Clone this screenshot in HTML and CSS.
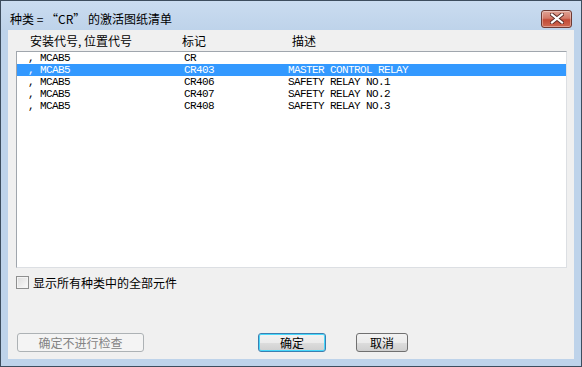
FILE: index.html
```html
<!DOCTYPE html>
<html lang="zh-CN">
<head>
    <meta charset="UTF-8">
    <title>激活图纸清单</title>
    <link rel="stylesheet" href="styles.css">
</head>
<body>
    <div class="window">
        <!-- Titelleiste -->
        <div class="titlebar">
            <span class="title">种类 = “CR” 的激活图纸清单</span>
            <button class="close" aria-label="关闭">
                <svg width="14" height="11" viewBox="0 0 14 11">
                    <path d="M2 1.5 L12 9.5 M12 1.5 L2 9.5" stroke="#5a2a24" stroke-width="4" stroke-linecap="square"/>
                    <path d="M2 1.5 L12 9.5 M12 1.5 L2 9.5" stroke="#ffffff" stroke-width="2.2" stroke-linecap="square"/>
                </svg>
            </button>
        </div>

        <div class="client">
            <div class="columns">
                <span>安装代号, 位置代号</span>
                <span>标记</span>
                <span>描述</span>
            </div>

            <div class="listbox" id="drawing-list">
                <!-- Zeilen werden per Skript eingefügt -->
            </div>

            <label class="check">
                <span class="box"></span>
                <span>显示所有种类中的全部元件</span>
            </label>

            <div class="buttons">
                <button class="btn btn-nocheck" disabled>确定不进行检查</button>
                <button class="btn btn-ok">确定</button>
                <button class="btn btn-cancel">取消</button>
            </div>
        </div>
    </div>

    <script>
        // Daten der Liste
        const rows = [
            ["MCAB5", "CR", ""],
            ["MCAB5", "CR403", "MASTER CONTROL RELAY"],
            ["MCAB5", "CR406", "SAFETY RELAY NO.1"],
            ["MCAB5", "CR407", "SAFETY RELAY NO.2"],
            ["MCAB5", "CR408", "SAFETY RELAY NO.3"]
        ];
        const selected = 1;

        const list = document.getElementById("drawing-list");
        rows.forEach((item, i) => {
            const row = document.createElement("div");
            row.className = "row" + (i === selected ? " selected" : "");
            row.innerHTML = `
                <span>, ${item[0]}</span>
                <span>${item[1]}</span>
                <span>${item[2]}</span>
            `;
            list.appendChild(row);
        });
    </script>
</body>
</html>
```

FILE: styles.css
```css
* {
    box-sizing: border-box;
    margin: 0;
    padding: 0;
}

body {
    width: 582px;
    height: 367px;
    font-family: "Noto Sans CJK SC", "Noto Sans", sans-serif;
    font-size: 12px;
    color: #000;
    background: #fff;
}

.window {
    width: 582px;
    height: 367px;
    border: 1px solid #3d4d5e;
    background: #bed3ea;
    display: flex;
    flex-direction: column;
    padding: 0 7px 7px 7px;
}

.titlebar {
    height: 29px;
    padding-top: 6px;
    display: flex;
    align-items: center;
    justify-content: space-between;
    margin: 0 -7px;
    padding-left: 9px;
    padding-right: 9px;
    background: linear-gradient(#cadcf0, #bed3ea);
}

.title {
    font-size: 12px;
    line-height: 14px;
}

.close {
    width: 31px;
    height: 18px;
    border: 1px solid #6e3a33;
    border-radius: 3px;
    background: linear-gradient(#e0a395 0%, #d47a68 45%, #c24a36 55%, #cf6a52 100%);
    display: flex;
    align-items: center;
    justify-content: center;
    box-shadow: inset 0 0 0 1px rgba(255, 255, 255, 0.35);
}

.client {
    flex: 1;
    background: #f0f0f0;
    display: flex;
    flex-direction: column;
}

.columns {
    height: 21px;
    line-height: 21px;
    padding-left: 22px;
    display: grid;
    grid-template-columns: 152px 110px 1fr;
}

.listbox {
    margin-left: 8px;
    width: 551px;
    height: 217px;
    background: #fff;
    border: 1px solid #a0a6ad;
    border-right-color: #dcdfe3;
    border-bottom-color: #dcdfe3;
}

.row {
    height: 12px;
    line-height: 12px;
    padding-left: 11px;
    display: grid;
    grid-template-columns: 156px 104px 1fr;
    font-family: "Liberation Mono", "DejaVu Sans Mono", monospace;
    font-size: 11px;
    letter-spacing: -0.6px;
    white-space: pre;
}

.row.selected {
    background: #3399ff;
    color: #fff;
}

.check {
    margin-top: 8px;
    margin-left: 8px;
    height: 13px;
    display: flex;
    align-items: center;
    gap: 4px;
    line-height: 13px;
}

.box {
    width: 13px;
    height: 13px;
    border: 1px solid #8e8f8f;
    background: linear-gradient(135deg, #dcdcdc, #fbfbfb);
    box-shadow: inset 0 0 0 1px #f4f4f4;
}

.buttons {
    margin-top: 44px;
    margin-left: 9px;
    display: flex;
}

.btn {
    height: 19px;
    font-family: inherit;
    font-size: 12px;
    line-height: 15px;
    border: 1px solid #707070;
    border-radius: 3px;
    color: #000;
    background: linear-gradient(#f2f2f2 0%, #ebebeb 50%, #dddddd 51%, #cfcfcf 100%);
}

.btn-nocheck {
    width: 127px;
    color: #838383;
    border-color: #adb2b5;
    background: #f4f4f4;
}

.btn-ok {
    width: 68px;
    margin-left: 114px;
    border-color: #3c7fb1;
    box-shadow: inset 0 0 0 1px #48d8fb;
}

.btn-cancel {
    width: 52px;
    margin-left: 30px;
}
```
